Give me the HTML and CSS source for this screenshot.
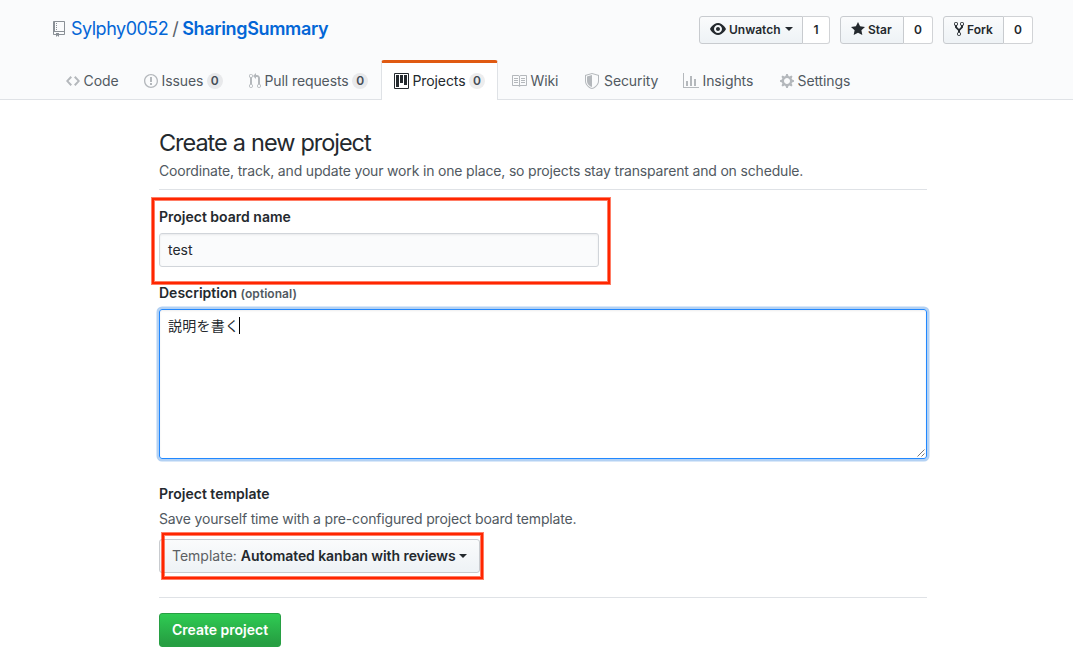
FILE: index.html
```html
<!DOCTYPE html>
<html lang="en">
<head>
<meta charset="utf-8">
<title>Create a new project</title>
<link rel="stylesheet" href="styles.css">
</head>
<body>
<header class="repohead">
  <div class="repohead-top">
    <h1 class="repo-title">
      <svg class="repo-icon" width="12" height="16" viewBox="0 0 12 16"><path fill-rule="evenodd" d="M4 9H3V8h1v1zm0-3H3v1h1V6zm0-2H3v1h1V4zm0-2H3v1h1V2zm8-1v12c0 .55-.45 1-1 1H6v2l-1.5-1.5L3 16v-2H1c-.55 0-1-.45-1-1V1c0-.55.45-1 1-1h10c.55 0 1 .45 1 1zm-1 10H1v2h2v-1h3v1h5v-2zm0-10H2v9h9V1z"/></svg>
      <a class="owner">Sylphy0052</a><span class="divider">/</span><a class="repo-name">SharingSummary</a>
    </h1>
    <ul class="actions">
      <li class="action action-watch"><button class="btn btn-sm"><svg width="16" height="16" viewBox="0 0 16 16"><path fill-rule="evenodd" d="M8.06 2C3 2 0 8 0 8s3 6 8.06 6C13 14 16 8 16 8s-3-6-7.94-6zM8 12c-2.2 0-4-1.78-4-4 0-2.2 1.8-4 4-4 2.22 0 4 1.8 4 4 0 2.22-1.78 4-4 4zm2-4c0 1.11-.89 2-2 2-1.11 0-2-.89-2-2 0-1.11.89-2 2-2 1.11 0 2 .89 2 2z"/></svg><span>Unwatch</span><i class="caret"></i></button><a class="social-count">1</a></li>
      <li class="action action-star"><button class="btn btn-sm"><svg width="14" height="16" viewBox="0 0 14 16"><path d="M14 6l-4.9-.64L7 1 4.9 5.36 0 6l3.6 3.26L2.67 14 7 11.67 11.33 14l-.93-4.74L14 6z"/></svg><span>Star</span></button><a class="social-count">0</a></li>
      <li class="action action-fork"><button class="btn btn-sm"><svg width="10" height="16" viewBox="0 0 10 16"><path fill-rule="evenodd" d="M8 1a1.993 1.993 0 00-1 3.72V6L5 8 3 6V4.72A1.993 1.993 0 002 1a1.993 1.993 0 00-1 3.72V6.5l3 3v1.78A1.993 1.993 0 005 15a1.993 1.993 0 001-3.72V9.5l3-3V4.72A1.993 1.993 0 008 1zM2 4.2C1.34 4.2.8 3.65.8 3c0-.65.55-1.2 1.2-1.2.65 0 1.2.55 1.2 1.2 0 .65-.55 1.2-1.2 1.2zm3 10c-.66 0-1.2-.55-1.2-1.2 0-.65.55-1.2 1.2-1.2.65 0 1.2.55 1.2 1.2 0 .65-.55 1.2-1.2 1.2zm3-10c-.66 0-1.2-.55-1.2-1.2 0-.65.55-1.2 1.2-1.2.65 0 1.2.55 1.2 1.2 0 .65-.55 1.2-1.2 1.2z"/></svg><span>Fork</span></button><a class="social-count">0</a></li>
    </ul>
  </div>
  <nav class="tabs">
    <a class="tab"><svg width="14" height="16" viewBox="0 0 14 16"><path d="M9.5 3L8 4.5 11.5 8 8 11.5 9.5 13 14 8 9.5 3zm-5 0L0 8l4.5 5L6 11.5 2.5 8 6 4.5 4.5 3z"/></svg><span>Code</span></a>
    <a class="tab"><svg width="14" height="16" viewBox="0 0 14 16"><path fill-rule="evenodd" d="M7 2.3c3.14 0 5.7 2.56 5.7 5.7s-2.56 5.7-5.7 5.7A5.71 5.71 0 011.3 8c0-3.14 2.56-5.7 5.7-5.7zM7 1C3.14 1 0 4.14 0 8s3.14 7 7 7 7-3.14 7-7-3.14-7-7-7zm1 3H6v5h2V4zm0 6H6v2h2v-2z"/></svg><span>Issues</span><b class="counter">0</b></a>
    <a class="tab"><svg width="12" height="16" viewBox="0 0 12 16"><path fill-rule="evenodd" d="M11 11.28V5c-.03-.78-.34-1.47-.94-2.06C9.46 2.35 8.78 2.03 8 2H7V0L4 3l3 3V4h1c.27.02.48.11.69.31.21.2.3.42.31.69v6.28A1.993 1.993 0 0010 15a1.993 1.993 0 001-3.72zm-1 2.92c-.66 0-1.2-.55-1.2-1.2 0-.65.55-1.2 1.2-1.2.65 0 1.2.55 1.2 1.2 0 .65-.55 1.2-1.2 1.2zM4 3c0-1.11-.89-2-2-2a1.993 1.993 0 00-1 3.72v6.56A1.993 1.993 0 002 15a1.993 1.993 0 001-3.72V4.72c.59-.34 1-.98 1-1.72zm-.8 10c0 .66-.55 1.2-1.2 1.2-.65 0-1.2-.55-1.2-1.2 0-.65.55-1.2 1.2-1.2.65 0 1.2.55 1.2 1.2zM2 4.2C1.34 4.2.8 3.65.8 3c0-.65.55-1.2 1.2-1.2.65 0 1.2.55 1.2 1.2 0 .65-.55 1.2-1.2 1.2z"/></svg><span>Pull requests</span><b class="counter">0</b></a>
    <a class="tab selected"><svg width="15" height="16" viewBox="0 0 15 16"><path fill-rule="evenodd" d="M10 12h3V2h-3v10zm-4-2h3V2H6v8zm-4 4h3V2H2v12zm-1 1h13V1H1v14zM14 0H1a1 1 0 00-1 1v14a1 1 0 001 1h13a1 1 0 001-1V1a1 1 0 00-1-1z"/></svg><span>Projects</span><b class="counter">0</b></a>
    <a class="tab"><svg width="16" height="16" viewBox="0 0 16 16"><path fill-rule="evenodd" d="M3 5h4v1H3V5zm0 3h4V7H3v1zm0 2h4V9H3v1zm11-5h-4v1h4V5zm0 2h-4v1h4V7zm0 2h-4v1h4V9zm2-6v9c0 .55-.45 1-1 1H9.5l-1 1-1-1H2c-.55 0-1-.45-1-1V3c0-.55.45-1 1-1h5.5l1 1 1-1H15c.55 0 1 .45 1 1zm-8 .5L7.5 3H2v9h6V3.5zm7-.5H9.5l-.5.5V12h6V3z"/></svg><span>Wiki</span></a>
    <a class="tab tab-security"><svg width="14" height="16" viewBox="0 0 14 16"><path fill-rule="evenodd" d="M0 2l7-2 7 2v6.02C14 12.69 8.69 16 7 16c-1.69 0-7-3.31-7-7.98V2zm1 .75L7 1l6 1.75v5.268C13 12.104 8.449 15 7 15c-1.449 0-6-2.896-6-6.982V2.75zm1 .75L7 2v12c-1.207 0-5-2.482-5-5.985V3.5z"/></svg><span>Security</span></a>
    <a class="tab"><svg width="16" height="16" viewBox="0 0 16 16"><path fill-rule="evenodd" d="M16 14v1H0V0h1v14h15zM5 13H3V8h2v5zm4 0H7V3h2v10zm4 0h-2V6h2v7z"/></svg><span>Insights</span></a>
    <a class="tab"><svg width="14" height="16" viewBox="0 0 14 16"><path fill-rule="evenodd" d="M14 8.77v-1.6l-1.94-.64-.45-1.09.88-1.84-1.13-1.13-1.81.91-1.09-.45-.69-1.92h-1.6l-.63 1.94-1.11.45-1.84-.88-1.13 1.13.91 1.81-.45 1.09L0 7.23v1.59l1.94.64.45 1.09-.88 1.84 1.13 1.13 1.81-.91 1.09.45.69 1.92h1.59l.63-1.94 1.11-.45 1.84.88 1.13-1.13-.92-1.81.47-1.09L14 8.75v.02zM7 11c-1.66 0-3-1.34-3-3s1.34-3 3-3 3 1.34 3 3-1.34 3-3 3z"/></svg><span>Settings</span></a>
  </nav>
</header>
<main class="content">
  <div class="subhead">
    <h2 class="subhead-title">Create a new project</h2>
    <p class="lead">Coordinate, track, and update your work in one place, so projects stay transparent and on schedule.</p>
  </div>
  <form class="form">
    <div class="field field-name">
      <label class="label">Project board name</label>
      <div class="input">test</div>
      <div class="mark mark-name"></div>
    </div>
    <div class="field field-description">
      <label class="label">Description <span class="optional">(optional)</span></label>
      <div class="textarea"><span class="typed">説明を書く</span><i class="cursor"></i>
        <svg class="grip" width="8" height="8" viewBox="0 0 8 8"><path d="M.5 7.5l7-7M4.5 7.5l3-3"/></svg>
      </div>
    </div>
    <div class="field field-template">
      <label class="label">Project template</label>
      <p class="note">Save yourself time with a pre-configured project board template.</p>
      <div class="template-row">
        <button type="button" class="btn btn-template"><span class="prefix">Template:</span><span class="choice">Automated kanban with reviews</span><i class="caret"></i></button>
        <div class="mark mark-template"></div>
      </div>
    </div>
    <div class="form-actions"><button type="button" class="btn-primary">Create project</button></div>
  </form>
</main>
</body>
</html>
```
FILE: styles.css
```css
* { box-sizing: border-box; }
body {
  margin: 0;
  height: 661px;
  overflow: hidden;
  background: #fff;
  color: #24292e;
  font: 14px/21px Inter, "Noto Sans CJK JP", sans-serif;
}
h1, h2, p, ul { margin: 0; padding: 0; font-weight: 400; }
svg { flex: none; fill: currentColor; }
button { font: inherit; margin: 0; }

/* Repository header */
.repohead {
  height: 100px;
  padding: 16px 40px 0 52px;
  background: #fafbfc;
  border-bottom: 1px solid #dfe2e6;
}
.repohead-top { display: flex; justify-content: space-between; height: 44px; }
.repo-title {
  display: flex;
  align-items: center;
  height: 25px;
  font-size: 18px;
  color: #0366d6;
}
.repo-icon { margin: 0 6px 0 1px; color: #8a9096; }
.owner { letter-spacing: -.5px; }
.divider { margin: 0 3.5px 0 4px; color: #586069; }
.repo-name { font-weight: 600; letter-spacing: -.35px; }
.actions { display: flex; gap: 10px; list-style: none; }
.action { display: flex; height: 28px; font-size: 12px; font-weight: 600; }
.action-watch { width: 131px; }
.action-star { width: 93px; }
.action-fork { width: 90px; }
.btn {
  display: flex;
  align-items: center;
  white-space: nowrap;
  color: #24292e;
  font-weight: 600;
  border: 1px solid #c8cbcf;
  border-radius: 3px;
  background: linear-gradient(180deg, #fafbfc, #eff3f6 90%);
}
.btn-sm { flex: none; padding: 0 0 2px 10px; border-radius: 3px 0 0 3px; }
.action-watch .btn-sm { width: 104px; }
.action-star .btn-sm { width: 64px; }
.action-fork .btn-sm { width: 61px; }
.btn-sm svg { margin-right: 3px; }
.social-count {
  flex: 1;
  border: 1px solid #d1d3d6;
  border-left: 0;
  border-radius: 0 3px 3px 0;
  background: #fff;
  line-height: 25px;
  text-align: center;
}
.caret {
  margin-left: 4px;
  border: 4px solid transparent;
  border-top-color: currentColor;
  border-bottom: 0;
}
.btn-template .caret { margin-left: 3px; }

/* Tabs */
.tabs {
  display: grid;
  grid-template-columns: 78px 105px 146px 117px 73px 98px 97px 100px;
  height: 40px;
}
.tab {
  display: flex;
  align-items: center;
  padding: 1px 0 0 14px;
  color: #515961;
  letter-spacing: -.1px;
  white-space: nowrap;
}
.selected + .tab { padding-left: 13px; }
.tab svg { margin-top: 1px; margin-right: 3.5px; color: #b4b8bc; }
.tab-security svg { margin-right: 5px; }
.counter {
  width: 16px;
  margin: 1px 0 0 3.5px;
  padding: 2px 0;
  border-radius: 20px;
  background: rgba(27, 31, 35, .08);
  color: #444d56;
  font-size: 12px;
  font-weight: 600;
  line-height: 12px;
  text-align: center;
}
.selected {
  padding: 0 0 2px 12px;
  color: #24292e;
  background: #fff;
  border: 1px solid #dfe2e6;
  border-top: 3px solid #e05a12;
  border-bottom: 0;
  border-radius: 3px 3px 0 0;
}
.selected svg { color: #24292e; }

/* Form */
.content { width: 768px; margin-left: 159px; }
.subhead { height: 90px; padding-top: 28px; border-bottom: 1px solid #dfe2e6; }
.subhead-title { font-size: 23.5px; line-height: 30px; letter-spacing: -1.05px; word-spacing: .6px; }
.lead { margin-top: 2px; color: #515961; letter-spacing: -.17px; }
.label { display: block; height: 21px; font-weight: 600; }
.field-name { position: relative; height: 92px; padding-top: 16px; }
.input {
  width: 440px;
  height: 34px;
  margin-top: 6px;
  padding: 0 8px;
  border: 1px solid #d1d5da;
  border-radius: 3px;
  background: #fafbfc;
  box-shadow: inset 0 1px 2px rgba(27, 31, 35, .075);
  line-height: 32px;
}
.mark {
  position: absolute;
  border: 2px solid #ff2600;
  box-shadow: 0 0 0 1px rgba(255, 38, 0, .6), inset 0 0 0 1px rgba(255, 38, 0, .6);
}
.mark-name { top: 8px; left: -7px; width: 458px; height: 86px; }
.field-description { height: 201px; }
.optional { font-size: 12px; color: #515961; letter-spacing: .05px; }
.textarea {
  position: relative;
  display: flex;
  align-items: flex-start;
  height: 150px;
  margin-top: 6px;
  padding: 6px 8px;
  border: 1px solid #2188ff;
  border-radius: 3px;
  box-shadow: inset 0 1px 2px rgba(27, 31, 35, .075), 0 0 0 2.5px rgba(3, 102, 214, .3);
}
.typed { line-height: 19px; letter-spacing: .25px; }
.cursor { width: 1px; height: 17px; margin-top: 1px; background: #000; }
.grip { position: absolute; right: 1px; bottom: 1px; fill: none; stroke: #555; stroke-width: .8; }
.field-template { height: 114px; }
.note { margin-top: 4px; color: #515961; letter-spacing: -.16px; }
.template-row { position: relative; display: flex; margin-top: 10px; }
.btn-template { height: 34px; width: 321px; padding: 0 12px 1px; font-size: 14px; }
.choice { letter-spacing: -.07px; }
.prefix { margin-right: 4px; font-weight: 400; color: #5c5f63; }
.mark-template { top: -6px; left: 3px; width: 321px; height: 46px; }
.form-actions { padding-top: 15px; border-top: 1px solid #dfe2e6; }
.btn-primary {
  display: block;
  width: 122px;
  height: 34px;
  padding: 0 0 2px;
  border: 1px solid #279f43;
  border-radius: 3px;
  background: linear-gradient(180deg, #2fcb53, #269f42 90%);
  color: #fff;
  font-weight: 600;
  text-align: center;
  white-space: nowrap;
}
```
